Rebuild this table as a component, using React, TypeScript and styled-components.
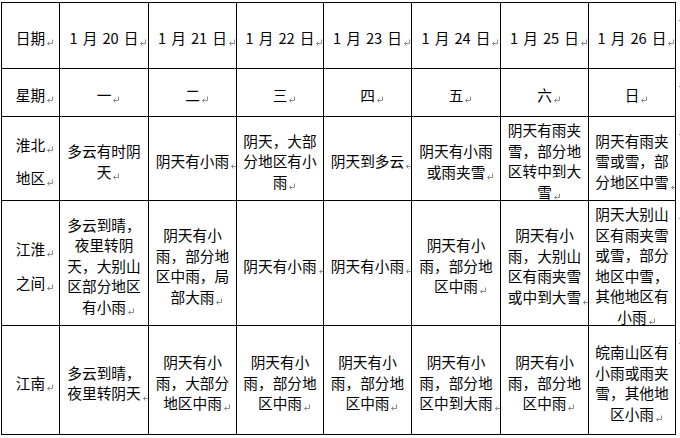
import React from "react";
import styled, { createGlobalStyle } from "styled-components";

const GlobalStyle = createGlobalStyle`
  html, body {
    margin: 0;
    background: #ffffff;
    overflow: hidden;
  }
`;

const dates = ["1 月 20 日", "1 月 21 日", "1 月 22 日", "1 月 23 日", "1 月 24 日", "1 月 25 日", "1 月 26 日"];
const weekdays = ["一", "二", "三", "四", "五", "六", "日"];

// heights of the five rows, between the ruling lines
const rowHeights = [65, 47, 83, 124, 108];
const LINE = 20.5;

const regions: { name: string[]; height: number; cells: string[][] }[] = [
  {
    name: ["淮北", "地区"],
    height: rowHeights[2],
    cells: [
      ["多云有时阴", "天"],
      ["阴天有小雨"],
      ["阴天，大部", "分地区有小", "雨"],
      ["阴天到多云"],
      ["阴天有小雨", "或雨夹雪"],
      ["阴天有雨夹", "雪，部分地", "区转中到大", "雪"],
      ["阴天有雨夹", "雪或雪，部", "分地区中雪"],
    ],
  },
  {
    name: ["江淮", "之间"],
    height: rowHeights[3],
    cells: [
      ["多云到晴，", "夜里转阴", "天，大别山", "区部分地区", "有小雨"],
      ["阴天有小", "雨，部分地", "区中雨，局", "部大雨"],
      ["阴天有小雨"],
      ["阴天有小雨"],
      ["阴天有小", "雨，部分地", "区中雨"],
      ["阴天有小", "雨，大别山", "区有雨夹雪", "或中到大雪"],
      ["阴天大别山", "区有雨夹雪", "或雪，部分", "地区中雪，", "其他地区有", "小雨"],
    ],
  },
  {
    name: ["江南"],
    height: rowHeights[4],
    cells: [
      ["多云到晴，", "夜里转阴天"],
      ["阴天有小", "雨，大部分", "地区中雨"],
      ["阴天有小", "雨，部分地", "区中雨"],
      ["阴天有小", "雨，部分地", "区中雨"],
      ["阴天有小", "雨，部分地", "区中到大雨"],
      ["阴天有小", "雨，部分地", "区中雨"],
      ["皖南山区有", "小雨或雨夹", "雪，其他地", "区小雨"],
    ],
  },
];

export default function App() {
  return (
    <>
      <GlobalStyle />
      <Page>
        <Table>
          <Cell>
            <Line>日期<Mark /></Line>
          </Cell>
          {dates.map((d) => (
            <Cell key={d}>
              <DateLine>{d}<Mark /></DateLine>
            </Cell>
          ))}

          <Cell>
            <Line>星期<Mark /></Line>
          </Cell>
          {weekdays.map((w) => (
            <Cell key={w}>
              <Line>{w}<Mark /></Line>
            </Cell>
          ))}

          {regions.map((r) => (
            <React.Fragment key={r.name.join("")}>
              <Cell>
                {r.name.map((p) => (
                  <Line key={p}>{p}<Mark /></Line>
                ))}
              </Cell>
              {r.cells.map((lines, i) => (
                <Cell key={i} $dense={lines.length * LINE + 6 > r.height}>
                  <Line>
                    {lines.map((l, j) => (
                      <React.Fragment key={j}>
                        {l}
                        {j < lines.length - 1 ? <br /> : <Mark />}
                      </React.Fragment>
                    ))}
                  </Line>
                </Cell>
              ))}
            </React.Fragment>
          ))}
        </Table>
        <RowEnds>
          {rowHeights.map((h, i) => (
            <RowEnd key={i}>
              <Mark />
            </RowEnd>
          ))}
        </RowEnds>
      </Page>
    </>
  );
}

function Mark() {
  return (
    <MarkBox>
      <svg width="8" height="7" viewBox="0 0 8 7">
        <path d="M6.5 0.5V4.5H1.5M3.5 2.5L1.5 4.5L3.5 6.5" stroke="#8c8c8c" strokeWidth="1" fill="none" />
      </svg>
    </MarkBox>
  );
}

const Page = styled.div`
  display: flex;
  align-items: flex-start;
  padding: 2px 0 0 1px;
  font-family: "Noto Sans CJK SC", "Noto Sans", sans-serif;
  font-size: 14.67px;
  color: #000000;
`;

const Table = styled.div`
  display: grid;
  grid-template-columns: 57px 88px 87px 86px 87px 88px 87px 86px;
  grid-template-rows: ${rowHeights.map((h) => `${h}px`).join(" ")};
  gap: 1px;
  padding: 1px;
  background: #000000;
`;

const Cell = styled.div<{ $dense?: boolean }>`
  display: flex;
  flex-direction: column;
  align-items: center;
  justify-content: safe center;
  gap: 13px;
  padding: ${(p) => (p.$dense ? "3px" : "6px")} 6px 0;
  background: #ffffff;
  overflow: hidden;
`;

const Line = styled.div`
  line-height: ${LINE}px;
  text-align: center;
  white-space: nowrap;
`;

const DateLine = styled(Line)`
  word-spacing: 0.12em;
`;

const MarkBox = styled.span`
  display: inline-block;
  position: relative;
  width: 0;
  height: 0;

  svg {
    position: absolute;
    left: 1px;
    bottom: -2px;
  }
`;

const RowEnds = styled.div`
  display: grid;
  grid-template-rows: ${rowHeights.map((h) => `${h}px`).join(" ")};
  gap: 1px;
  padding: 1px 0;
  margin-left: 1px;
  width: 10px;
`;

const RowEnd = styled.div`
  padding-top: 12px;
  line-height: 0;
`;
